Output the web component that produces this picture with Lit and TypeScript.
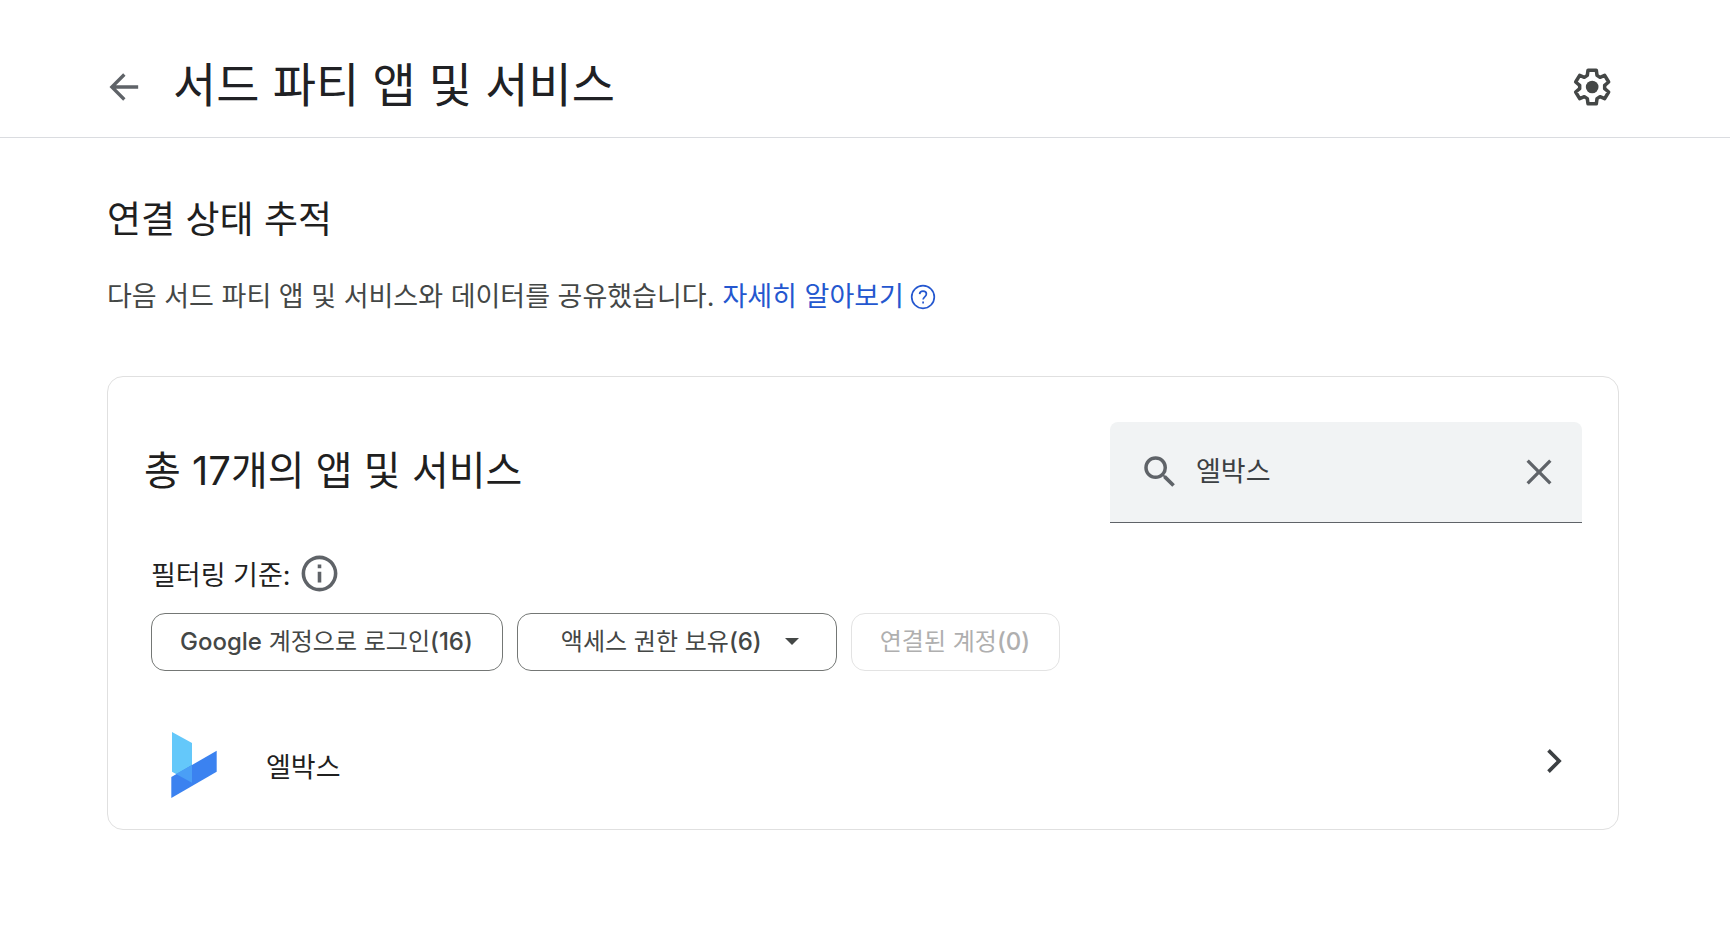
import { LitElement, html, css, svg } from "lit";
import { customElement, state } from "lit/decorators.js";

@customElement("app-root")
export class AppRoot extends LitElement {
  static styles = css`
    :host {
      display: block;
      min-height: 100vh;
      background: #fff;
      color: #1f1f1f;
      font-family: Inter, "Noto Sans CJK KR", sans-serif;
    }
    * {
      box-sizing: border-box;
    }
    h1,
    h2,
    p,
    ul {
      margin: 0;
      padding: 0;
      font-weight: 400;
    }
    ul {
      list-style: none;
    }
    button {
      font: inherit;
      color: inherit;
      background: none;
      border: 0;
      margin: 0;
      padding: 0;
      cursor: pointer;
    }
    svg {
      display: block;
      flex: none;
    }
    .header {
      display: flex;
      align-items: center;
      gap: 29px;
      height: 138px;
      padding: 37px 116px 0 104px;
      border-bottom: 1px solid #dadce0;
    }
    .back {
      color: #5f6368;
    }
    .title {
      flex: 1;
      font-size: 47px;
      line-height: 64px;
      color: #202124;
      padding-bottom: 4px;
    }
    .gear {
      color: #444746;
    }
    .content {
      padding: 56px 111px 64px 107px;
    }
    .section-title {
      font-size: 37px;
      line-height: 52px;
    }
    .lead {
      display: flex;
      flex-wrap: wrap;
      align-items: center;
      gap: 8px;
      margin-top: 31px;
      font-size: 27px;
      line-height: 40px;
      color: #444746;
    }
    .lead a {
      display: flex;
      align-items: center;
      gap: 6px;
      color: #2457cf;
      text-decoration: none;
    }
    .card {
      margin-top: 59px;
      padding: 45px 36px 20px;
      border: 1px solid #e0e0e0;
      border-radius: 16px;
    }
    .card-head {
      display: flex;
      justify-content: space-between;
      align-items: center;
      gap: 32px;
    }
    .count {
      font-size: 40px;
      line-height: 56px;
      padding-bottom: 4px;
    }
    .search {
      display: flex;
      align-items: center;
      width: 472px;
      height: 101px;
      padding: 0 23px 0 29px;
      background: #f1f3f4;
      border-bottom: 1px solid #5f6368;
      border-radius: 8px 8px 0 0;
      color: #5f6368;
    }
    .search input {
      flex: 1;
      min-width: 0;
      margin: 0 12px 0 15px;
      padding: 0;
      border: 0;
      outline: 0;
      background: none;
      font: inherit;
      font-size: 27px;
      line-height: 40px;
      color: #3c4043;
    }
    .filters {
      padding: 27px 7px 0;
    }
    .filter-label {
      display: flex;
      align-items: center;
      gap: 7px;
      font-size: 27px;
      line-height: 40px;
    }
    .filter-label span {
      padding-top: 6px;
    }
    .info {
      color: #5f6368;
    }
    .chips {
      display: flex;
      flex-wrap: wrap;
      gap: 14px;
      margin-top: 17px;
    }
    .chip {
      display: flex;
      align-items: center;
      height: 58px;
      padding: 0 29px 0 28px;
      border: 1px solid #747775;
      border-radius: 14px;
      font-size: 24px;
      line-height: 32px;
      color: #444746;
    }
    .chip b {
      font-weight: 500;
    }
    .chip.menu {
      gap: 23px;
      padding: 0 37px 0 43px;
    }
    .chip:disabled {
      border-color: #e3e3e3;
      color: #afafaf;
    }
    .row {
      display: flex;
      align-items: center;
      justify-content: space-between;
      margin-top: 42px;
      padding: 0 6px 0 27px;
      height: 96px;
      color: #1f1f1f;
      text-decoration: none;
      font-size: 27px;
      line-height: 40px;
    }
    .service {
      display: flex;
      align-items: center;
      gap: 47px;
      padding-top: 8px;
    }
    .service span {
      padding-top: 6px;
    }
    .chevron {
      color: #3c4043;
    }
  `;

  @state() private query = "엘박스";

  private chips = [
    { brand: "Google", label: " 계정으로 로그인", count: 16, menu: false },
    { brand: "", label: "액세스 권한 보유", count: 6, menu: true },
    { brand: "", label: "연결된 계정", count: 0, menu: false },
  ];

  private icon(size: number, body: unknown, cls = "") {
    return html`<svg class=${cls} width=${size} height=${size} viewBox="0 0 24 24" fill="currentColor" aria-hidden="true">${body}</svg>`;
  }

  render() {
    return html`
      <header class="header">
        <button class="back" aria-label="뒤로">
          ${this.icon(40, svg`<path d="M20.500 11H7.200l5.700-5.700L11.500 3.800 3.300 12l8.200 8.200 1.400-1.500L7.200 13h13.300z"/>`)}
        </button>
        <h1 class="title">서드 파티 앱 및 서비스</h1>
        <button class="gear" aria-label="설정">
          <svg width="44" height="44" viewBox="61 47 132 132" fill="none" stroke="currentColor" stroke-width="10.500" stroke-linejoin="round" aria-hidden="true">
            <path d="M115 63H140L142 78 151 84 165 78 177 98 165 108V118L177 128 165 148 151 142 142 148 140 163H115L113 148 104 142 90 148 78 128 90 118V108L78 98 90 78 104 84 113 78Z"/>
            <circle cx="127.500" cy="113" r="19" fill="currentColor" stroke="none"/>
          </svg>
        </button>
      </header>
      <main class="content">
        <h2 class="section-title">연결 상태 추적</h2>
        <p class="lead">
          <span>다음 서드 파티 앱 및 서비스와 데이터를 공유했습니다.</span>
          <a href="#help">자세히 알아보기
            <svg width="26" height="26" viewBox="0 0 26 26" fill="none" stroke="currentColor" stroke-width="1.700" aria-hidden="true">
              <circle cx="13" cy="13" r="11.300"/>
              <path d="M9.600 10.200c.2-1.900 1.600-3 3.400-3s3.400 1.200 3.400 2.900c0 2.600-3.300 2.900-3.300 5.500"/>
              <path d="M13.100 17.600v2"/>
            </svg>
          </a>
        </p>
        <section class="card">
          <div class="card-head">
            <h2 class="count">총 17개의 앱 및 서비스</h2>
            <div class="search">
              ${this.icon(42, svg`<path d="M15.500 14h-.79l-.28-.27A6.470 6.470 0 0 0 16 9.500 6.500 6.500 0 1 0 9.500 16c1.610 0 3.090-.59 4.230-1.570l.27.28v.79l5 4.990L20.490 19l-4.990-5zm-6 0C7.010 14 5 11.990 5 9.500S7.010 5 9.500 5 14 7.010 14 9.500 11.990 14 9.500 14z"/>`)}
              <input
                type="text"
                aria-label="앱 및 서비스 검색"
                .value=${this.query}
                @input=${(e: Event) => (this.query = (e.target as HTMLInputElement).value)}
              />
              <button aria-label="검색어 지우기" @click=${() => (this.query = "")}>
                ${this.icon(40, svg`<path d="M19.500 5.900 18.100 4.500 12 10.600 5.900 4.500 4.500 5.900l6.100 6.100-6.100 6.100 1.400 1.400 6.100-6.100 6.100 6.100 1.400-1.400-6.100-6.100z"/>`)}
              </button>
            </div>
          </div>
          <div class="filters">
            <div class="filter-label">
              <span>필터링 기준:</span>
              <button class="info" aria-label="필터링 기준 정보">
                ${this.icon(43, svg`<path d="M11 7h2v2h-2zm0 4h2v6h-2zm1-9a10 10 0 1 0 0 20 10 10 0 0 0 0-20zm0 18a8 8 0 1 1 0-16 8 8 0 0 1 0 16z"/>`)}
              </button>
            </div>
            <div class="chips">
              ${this.chips.map(
                (c) => html`<button class="chip ${c.menu ? "menu" : ""}" ?disabled=${c.count === 0}>
                  <span><b>${c.brand}</b>${c.label}<b>(${c.count})</b></span>
                  ${c.menu ? html`<svg width="14" height="8" viewBox="0 0 14 8" fill="currentColor" aria-hidden="true"><path d="M0 0h14L7 7z"/></svg>` : ""}
                </button>`
              )}
            </div>
          </div>
          <ul>
            <li>
              <a class="row" href="#lbox">
                <span class="service">
                  <svg width="48" height="68" viewBox="33 33 144 204" aria-hidden="true">
                    <path fill="#64c8fa" d="M36 36 96 69V188L36 155z"/>
                    <path fill="#3b82f0" d="M170 92V155L34 234V171z"/>
                    <path fill="#4a9ff6" d="M96 135V188L48 162z"/>
                  </svg>
                  <span>엘박스</span>
                </span>
                ${this.icon(44, svg`<path d="M9.700 5.500 8.300 6.900l5.100 5.100-5.100 5.100 1.400 1.400 6.500-6.500z"/>`, "chevron")}
              </a>
            </li>
          </ul>
        </section>
      </main>
    `;
  }
}
